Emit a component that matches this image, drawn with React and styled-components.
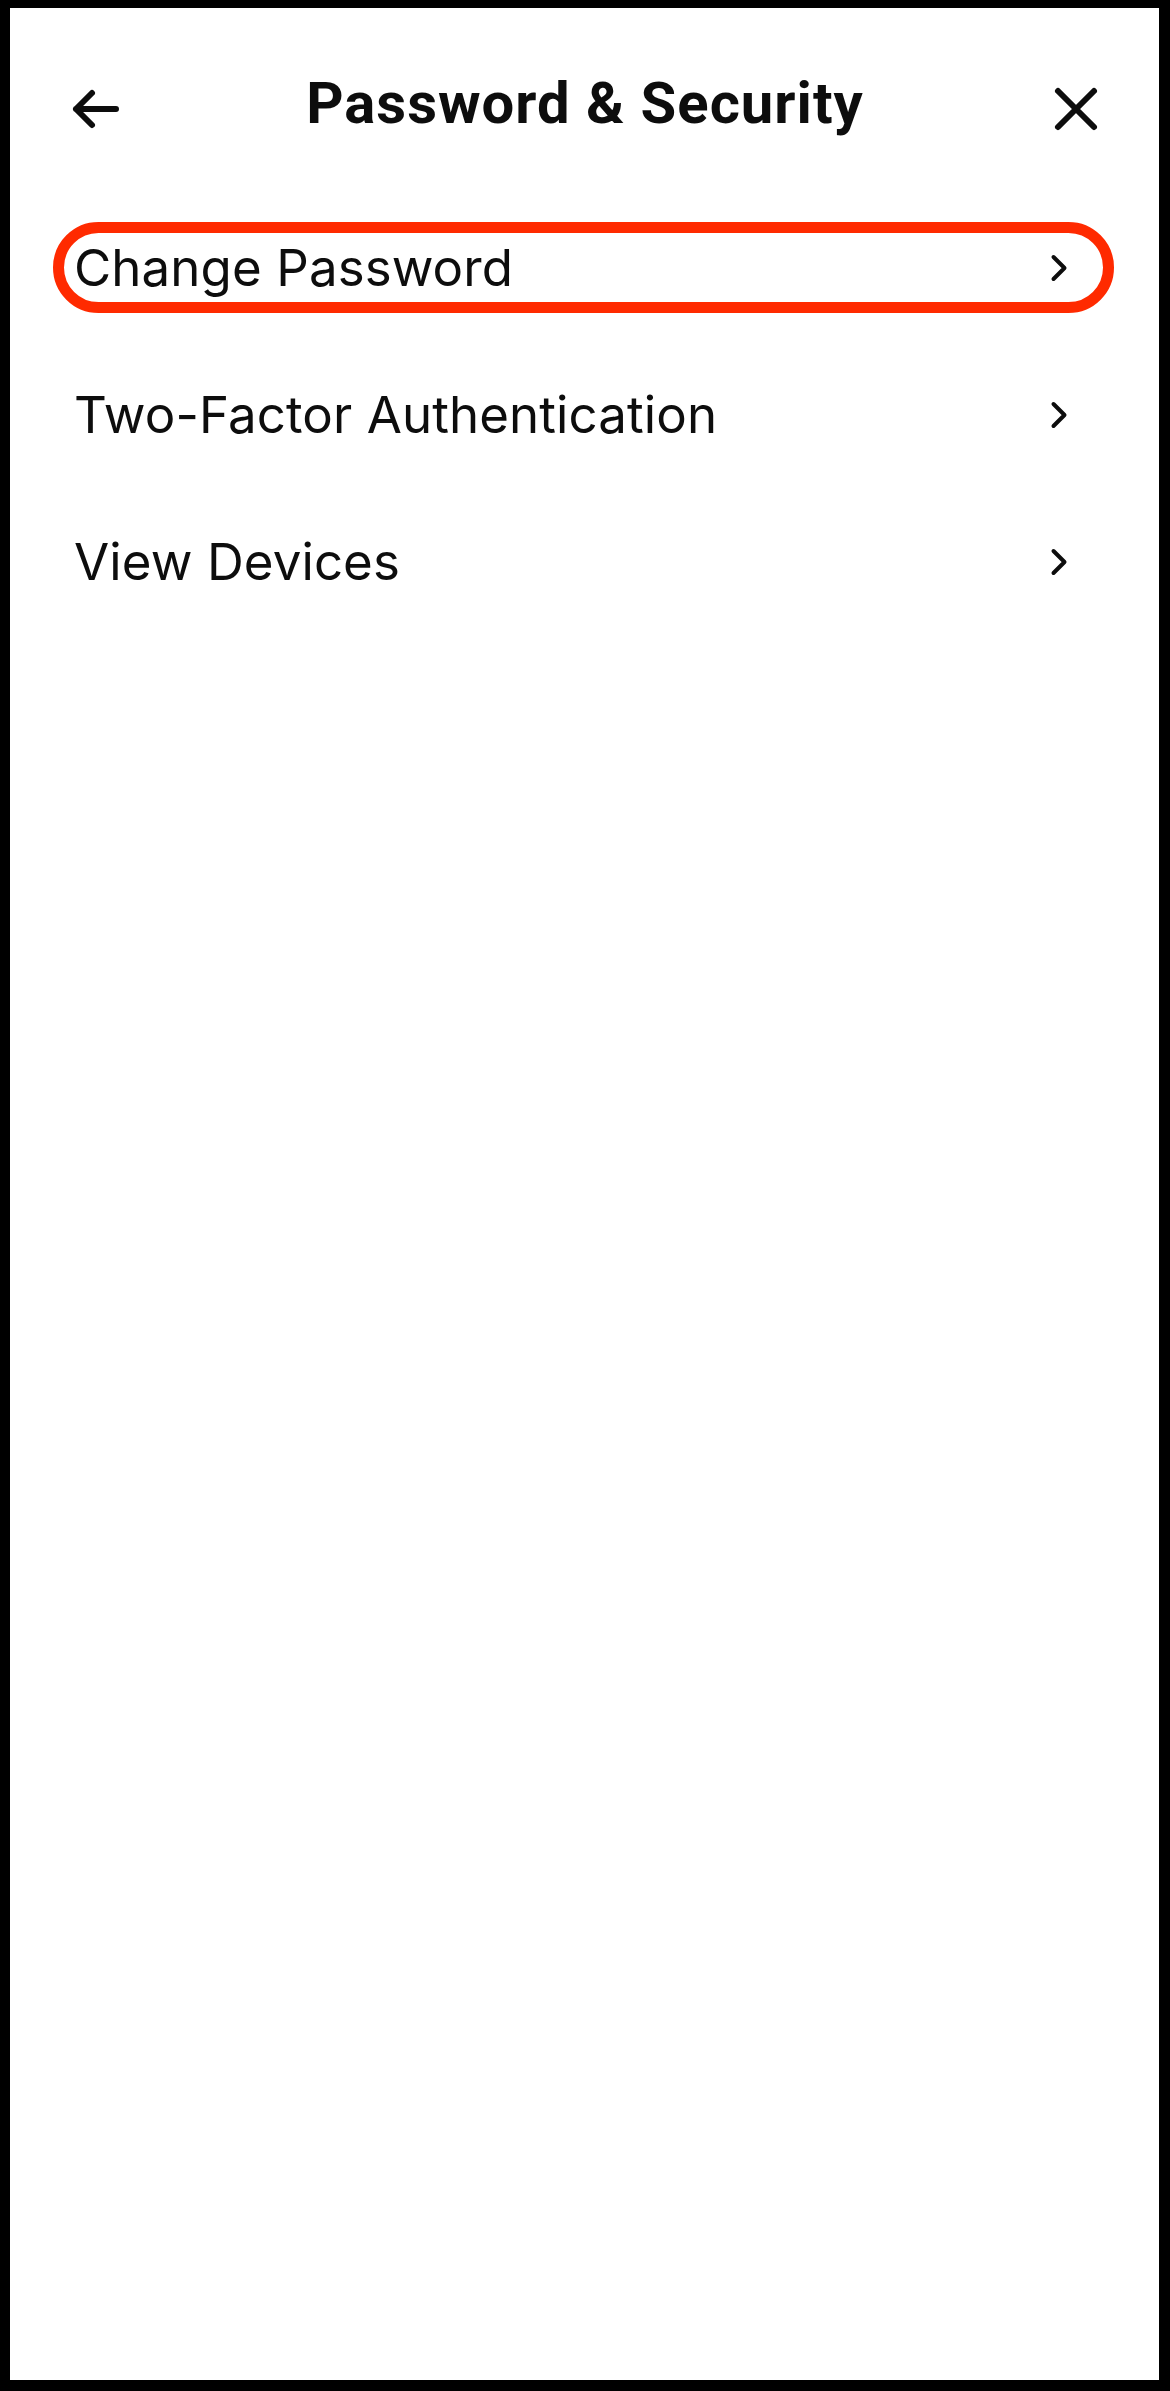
import React from 'react';
import styled, { createGlobalStyle } from 'styled-components';

const GlobalStyle = createGlobalStyle`
  html, body {
    margin: 0;
    padding: 0;
    background: #ffffff;
  }
  * {
    box-sizing: border-box;
  }
`;

const Frame = styled.div`
  width: 1170px;
  height: 2391px;
  border-style: solid;
  border-color: #000000;
  border-width: 8px 11px 11px 10px;
  background: #ffffff;
  display: flex;
  flex-direction: column;
`;

const Header = styled.header`
  height: 198px;
  display: grid;
  grid-template-columns: 1fr auto 1fr;
  align-items: center;
  padding: 0 59px 0 60px;
`;

const IconButton = styled.button`
  display: flex;
  align-items: center;
  justify-content: center;
  padding: 0;
  border: none;
  background: none;
  cursor: pointer;
  justify-self: ${(p) => (p.$end ? 'end' : 'start')};
  margin-top: ${(p) => p.$offset || 0}px;
`;

const Title = styled.h1`
  margin: 0 0 8px;
  font-family: Roboto, 'Liberation Sans', sans-serif;
  font-weight: 700;
  font-size: 58px;
  line-height: 1;
  letter-spacing: 1px;
  color: #0d0d0d;
`;

const List = styled.nav`
  margin-top: 16px;
  display: flex;
  flex-direction: column;
  gap: 56px;
  padding: 0 45px 0 43px;
`;

const Row = styled.a`
  height: 91px;
  display: flex;
  align-items: center;
  justify-content: space-between;
  padding: 0 34px 0 10px;
  border: 11px solid ${(p) => (p.$active ? '#ff2a00' : 'transparent')};
  border-radius: 999px;
  text-decoration: none;
  cursor: pointer;
`;

const Label = styled.span`
  font-family: Inter, 'Noto Sans', sans-serif;
  font-weight: 400;
  font-size: 51px;
  line-height: 1;
  letter-spacing: 0.1px;
  color: #0d0d0d;
`;

const BackIcon = () => (
  <svg width="52" height="46" viewBox="0 0 52 46" fill="none">
    <path
      d="M46 23H6M22 7L6 23l16 16"
      stroke="#0d0d0d"
      strokeWidth="6"
      strokeLinecap="round"
      strokeLinejoin="round"
    />
  </svg>
);

const CloseIcon = () => (
  <svg width="48" height="48" viewBox="0 0 48 48" fill="none">
    <path
      d="M6 6l36 36M42 6L6 42"
      stroke="#0d0d0d"
      strokeWidth="6"
      strokeLinecap="round"
    />
  </svg>
);

const Chevron = () => (
  <svg width="20" height="32" viewBox="0 0 20 32" fill="none">
    <path
      d="M4.5 5l11 11-11 11"
      stroke="#0d0d0d"
      strokeWidth="4"
      strokeLinecap="round"
      strokeLinejoin="round"
    />
  </svg>
);

const items = [
  { label: 'Change Password', active: true },
  { label: 'Two-Factor Authentication' },
  { label: 'View Devices' },
];

const App = () => {
  return (
    <>
      <GlobalStyle />
      <Frame>
        <Header>
          <IconButton aria-label="Back" $offset={4}>
            <BackIcon />
          </IconButton>
          <Title>Password &amp; Security</Title>
          <IconButton aria-label="Close" $end $offset={4}>
            <CloseIcon />
          </IconButton>
        </Header>
        <List>
          {items.map((item) => (
            <Row key={item.label} $active={item.active}>
              <Label>{item.label}</Label>
              <Chevron />
            </Row>
          ))}
        </List>
      </Frame>
    </>
  );
};

export default App;
